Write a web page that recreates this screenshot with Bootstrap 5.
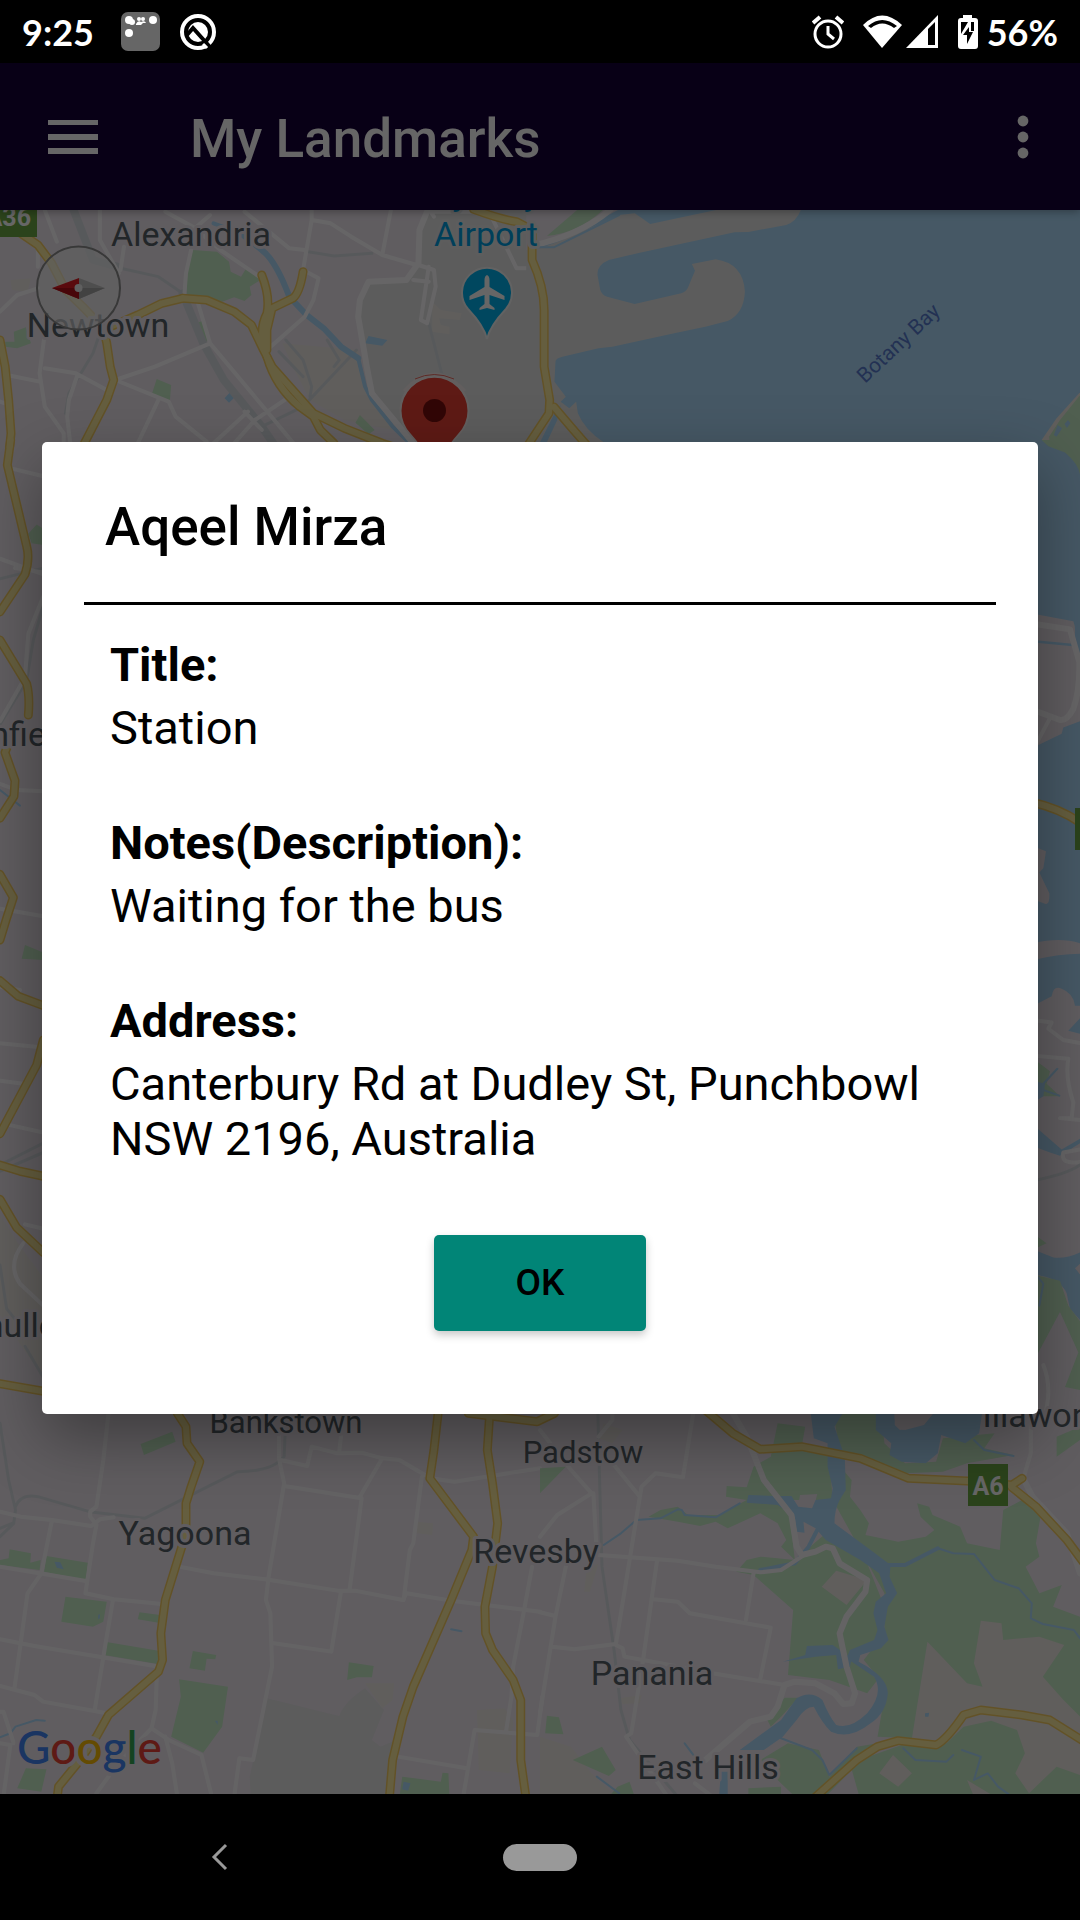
<!DOCTYPE html>
<html lang="en">
<head>
<meta charset="utf-8">
<meta name="viewport" content="width=device-width, initial-scale=1">
<title>My Landmarks</title>
<link rel="stylesheet" href="https://cdn.jsdelivr.net/npm/bootstrap@5.3.0/dist/css/bootstrap.min.css">
<style>
  body { font-family: Roboto, "Liberation Sans", sans-serif; background: #000; color: #000; }
  .status-bar { height: 63px; padding: 0 22px; background: #000; color: #fff; font: 700 36px/1 Lato, Roboto, sans-serif; }
  .status-bar svg, .nav-keys svg, .app-bar svg { display: block; flex: none; }
  .status-icons { gap: 19px; }
  .app-bar { height: 147px; padding: 0 48px; background: #160037; box-shadow: 0 2px 8px rgba(0,0,0,.3); z-index: 1; }
  .app-title { font-size: 53px; line-height: 62px; font-weight: 500; margin-left: 92px; color: #fff; }
  .icon-btn { background: none; border: 0; padding: 0; color: #fff; }
  .stage, .map-view { min-height: 0; }
  .scrim { background: rgba(0,0,0,.6); z-index: 2; padding: 0 42px 1px; }
  .landmark-dialog { border: 0; border-radius: 5px; background: #fff; box-shadow: 0 24px 64px rgba(0,0,0,.36); padding: 54px 42px 83px; }
  .landmark-name { font-size: 53px; line-height: 62px; font-weight: 500; margin: 0 0 44px; padding-left: 21px; }
  .rule-line { border-top: 3px solid #000; }
  .landmark-info { margin: 32px 0 0; padding: 0 26px; font-size: 47px; line-height: 55px; }
  .landmark-info dt { font-weight: 700; margin-bottom: 8px; }
  .landmark-info dd { margin: 0 0 60px; }
  .landmark-info dd:last-child { margin-bottom: 69px; }
  .ok-btn { width: 212px; height: 96px; padding: 0; border: 0; border-radius: 5px; background: #018577; color: #000; font-size: 37px; font-weight: 500; box-shadow: 0 4px 8px rgba(0,0,0,.22); }
  .ok-btn:hover { background: #01756a; color: #000; }
  .nav-keys { height: 126px; padding: 0 60px; background: #000; }
  .home-pill { width: 74px; height: 27px; border-radius: 14px; background: #999; }

  .map-art path { vector-effect: non-scaling-stroke; }
  .land { fill: #f0e8f1; } .water { fill: #aedcfc; } .park { fill: #c8edc8; } .field { fill: #e6e6e6; } .sand { fill: #f0ebe6; }
  .road, .rail, .creek, .casing, .lane { fill: none; stroke-linejoin: round; stroke-linecap: round; }
  .road { stroke: #fffdff; stroke-width: 4; } .road-lg { stroke-width: 6; } .bottom-road { stroke: #fbf8fb; }
  .rail { stroke: #dadfe3; stroke-width: 3; } .rail-lg { stroke-width: 8; }
  .creek { stroke: #aedcfc; stroke-width: 2; } .creek-md { stroke-width: 4; } .creek-lg { stroke-width: 6; }
  .casing { stroke: #f6cd62; } .lane { stroke: #fdec9f; }
  .casing .wide { stroke-width: 12; } .lane .wide { stroke-width: 8; }
  .casing { stroke-width: 9; } .lane { stroke-width: 6; }
  .place { font-size: 34px; fill: #555f66; stroke: #f0e8f1; stroke-width: 6; stroke-linejoin: round; paint-order: stroke; }
  .place-sm { font-size: 31px; }
  .poi { fill: #009fe0; stroke: #e9e9e9; }
  .bay { font-size: 21px; fill: #587cd0; }
  .shield { font-size: 25px; font-weight: 700; fill: #fff; }
  .brand { font: 500 46px Lato, sans-serif; stroke: #f0e8f1; stroke-width: 8; stroke-linejoin: round; paint-order: stroke; }
</style>
<script src="https://cdn.jsdelivr.net/npm/bootstrap@5.3.0/dist/js/bootstrap.bundle.min.js"></script>
</head>
<body>
<div class="vh-100 d-flex flex-column overflow-hidden">

  <header class="status-bar d-flex align-items-center justify-content-between flex-shrink-0">
    <div class="status-icons d-flex align-items-center">
      <span class="me-2">9:25</span>
      <svg width="39" height="39" viewBox="0 0 39 39" aria-hidden="true"><rect width="39" height="39" rx="7" fill="#666"/><g fill="#fff"><circle cx="8" cy="8" r="4"/><circle cx="11" cy="10" r="3"/><circle cx="18" cy="7" r="2"/><circle cx="22" cy="7" r="2"/><path d="M15 12q2-4 5-2q4-2 5 1h-3l-2 2h-5z"/><circle cx="32" cy="8" r="4"/><circle cx="8" cy="21" r="4"/></g></svg>
      <svg width="38" height="38" viewBox="0 0 38 38" aria-hidden="true"><circle cx="19" cy="19" r="16" fill="none" stroke="#fff" stroke-width="4"/><circle cx="19" cy="19" r="10" fill="#fff"/><path d="M8 22L14 15L31 34" fill="none" stroke="#000" stroke-width="4"/><path d="M24 31L28 35" stroke="#fff" stroke-width="3"/></svg>
    </div>
    <div class="status-icons d-flex align-items-center">
      <svg width="32" height="34" viewBox="0 0 32 34" aria-hidden="true"><g fill="none" stroke="#fff"><circle cx="16" cy="19" r="13" stroke-width="3"/><path d="M1 8L8 2M31 8L24 2" stroke-width="4"/><path d="M16 11V19L22 24" stroke-width="3"/></g></svg>
      <div class="d-flex gap-1">
        <svg width="39" height="33" viewBox="0 0 39 33" aria-hidden="true"><path d="M19 33L0 10Q19-9 39 10z" fill="#fff"/><path d="M5 11Q19-1 34 11L31 13Q19 4 8 13z"/></svg>
        <svg width="32" height="33" viewBox="0 0 32 33" aria-hidden="true"><path d="M32 0V33H0z" fill="#fff"/><path d="M22 14L29 7V30H22z"/></svg>
      </div>
      <div class="d-flex align-items-center gap-2">
        <svg width="22" height="34" viewBox="0 0 22 34" aria-hidden="true"><path d="M6 0H15V3H18Q21 3 21 6V31Q21 34 18 34H4Q1 34 1 31V6Q1 3 4 3H6z" fill="#fff"/><path d="M4 7H11L4 19zM14 7H17V16H14z" fill="#000"/><path d="M12 12L6 20H10V29L16 17H12z" fill="#000"/></svg>
        <span>56%</span>
      </div>
    </div>
  </header>

  <main class="stage position-relative flex-grow-1 d-flex flex-column">
    <nav class="app-bar position-relative d-flex align-items-center flex-shrink-0">
      <button class="icon-btn" type="button" aria-label="Menu">
        <svg width="50" height="34" viewBox="0 0 50 34"><path d="M0 0H50V5H0zM0 14H50V20H0zM0 28H50V34H0z" fill="currentColor"/></svg>
      </button>
      <h1 class="app-title mb-0 pt-1">My Landmarks</h1>
      <button class="icon-btn ms-auto" type="button" aria-label="More options">
        <svg width="18" height="44" viewBox="0 0 18 44"><g fill="currentColor"><circle cx="9" cy="6" r="5.4"/><circle cx="9" cy="22" r="5.4"/><circle cx="9" cy="38" r="5.4"/></g></svg>
      </button>
    </nav>

    <svg class="map-view map-art flex-grow-1 w-100" viewBox="0 210 1080 1584" preserveAspectRatio="xMidYMid slice" role="img" aria-label="Map">
      <defs>
        <g id="highways">
          <g transform="translate(0 200) scale(.3444 .3333)">
            <path d="M60 100L110 135L150 190L190 270L240 320L300 385L310 430L320 500L330 540L310 600L280 660L240 740M310 385L400 345L470 310L530 295"/>
            <path d="M0 420L15 500L25 600L32 700L28 740M760 225Q785 290 775 340Q750 390 770 450M880 215Q870 280 850 295L790 325L775 390L775 450M775 470Q800 560 870 620L910 650L930 690L970 730"/>
            <path class="wide" d="M530 295L600 300L680 335L730 375L765 450L790 500L850 570L910 640L1000 685L1110 730L1200 760M1375 28Q1460 60 1500 65L1545 90L1545 180Q1580 260 1580 330L1580 500L1596 600L1594 640L1530 740"/>
          </g>
          <path d="M554 407L571 427L591 450"/>
          <g transform="translate(0 440) scale(.3333 .625)">
            <path d="M32 0L22 40L80 170Q90 190 75 215L0 275M0 320L80 390Q90 410 85 440M30 480L15 500L45 545L42 570L0 605M0 695L40 732L20 765L0 800M0 865L55 890L130 905M130 960L110 1000L0 1110M0 1160L60 1170L130 1178M0 1215L50 1260L130 1300M0 1510L130 1522"/>
          </g>
          <g transform="translate(1000 440) scale(.3333 .625)"><path d="M100 580Q180 590 240 612"/></g>
          <g transform="translate(0 1400) scale(.3444 .3333)">
            <path d="M515 40L540 80L543 130L580 185L555 260L540 310L540 400L510 500L480 600L467 700L472 780L460 815L315 945L280 1010L225 1090L170 1160L165 1200"/>
            <path d="M1272 40L1260 150L1248 235L1375 410L1370 450L1310 600L1200 860L1170 950L1140 1080L1130 1200M1360 40L1560 65L1610 40"/>
            <path class="wide" d="M1422 40L1415 150L1430 250L1445 370L1430 500L1408 620L1410 700L1430 750L1490 840L1512 900L1512 1080L1528 1200"/>
          </g>
          <g transform="translate(540 1400) scale(.3444 .3333)">
            <path class="wide" d="M480 30L560 100L640 148L760 140L930 175L1070 235L1240 243L1370 255L1400 235M1370 262L1440 320L1530 420L1580 490"/>
            <path d="M790 1200L920 1080L980 1040L1040 1022L1150 1035Q1180 1020 1230 945L1280 930L1400 945L1480 960L1580 1025"/>
          </g>
        </g>
      </defs>
      <rect class="land" y="210" width="1080" height="1584"/>

      <!-- inner west, airport -->
      <g transform="translate(0 200) scale(.3444 .3333)">
        <path class="field" d="M1240 28L1220 100L1215 190L1180 240L1070 245L1040 330L1065 500L1080 580L1200 740L1600 740V28z"/>
        <path class="sand" d="M820 430L1040 450L1060 560L1140 690L1000 660L900 600L850 500z"/>
        <path class="sand" d="M1255 305L1280 330L1340 340L1335 360L1275 355L1280 375L1305 380V403L1255 395zM30 240L90 235L80 275L35 270z"/>
        <path class="park" d="M560 150L630 155L665 185L670 215L700 230L715 205L765 235L725 260L730 285L710 303L680 292L645 305L540 290L545 210zM568 370L590 362L608 420L585 430zM455 537L497 555L493 605L440 585zM40 395L75 382L90 430L50 445L15 440V425L42 425zM1045 645L1088 690L1070 703L1032 668z"/>
        <path class="water" d="M1060 430L1070 408L1125 420L1110 437zM652 595L668 577L683 590L665 608z"/>
        <path class="rail rail-lg" d="M210 20L270 180L340 200M530 280L590 430L650 540L760 680L800 740"/>
        <path class="rail" d="M350 205L460 230L530 280M290 400L270 460L200 580L190 640M830 420L880 480L905 560L900 590M810 455L880 530M950 420L985 480L970 500M1035 450L880 620L760 680M895 155L970 168L1080 160M1245 370L1285 530"/>
        <path class="creek creek-lg" d="M700 100L760 150Q800 180 840 290L890 345L940 385L990 440L1040 475"/>
        <path class="creek creek-md" d="M620 70L700 100M1040 475L1060 560L1080 600L1140 680L1190 730"/>
        <path class="road" d="M110 130L110 200M130 30L165 125M290 30L290 120L345 220M555 150L540 220L535 290M360 140L350 210M480 35L560 80L640 150L760 235M610 45L560 90M710 35L840 145L885 150M905 30L905 60L880 210L925 235L910 300L885 350L775 450M905 60L960 70L1020 110L1110 165L1210 195M1135 30L1110 165M0 335L50 285L110 265M575 310L610 430L780 640L860 740M610 430L450 500L335 540L490 605L510 650L600 725M130 400L115 520L130 620L185 700V740M130 505L220 520L310 570M225 525L200 600L195 650L205 740M20 525L115 545M460 600L400 730M855 580L740 660L680 730M720 635L620 730M0 605L15 610M710 635L760 690M1260 50L1250 35H1420L1500 205L1530 205"/>
        <path class="road road-lg" d="M1240 35L1218 90L1215 190L1180 240L1070 245L1045 300L1040 350L1065 500L1080 580L1160 680L1200 730"/>
        <path class="road" d="M1215 195L1260 210L1265 260L1240 370L1222 360L1245 200M1200 240L1245 245"/>
      </g>

      <!-- Botany Bay and the port -->
      <g transform="translate(540 200) scale(.3444 .3333)">
        <path class="water" d="M0 28H1600V760H0z"/>
        <path class="land" d="M-40 28H230L60 120L-40 150z"/>
        <path class="park" d="M110 28H185Q110 100 20 108z"/>
        <path class="field" d="M-40 160L60 122L230 45L275 40L320 72L520 28L758 28Q745 65 715 75L605 96L565 97L290 158L200 180Q165 195 167 225L175 270Q180 285 195 290L275 312L410 280Q425 275 430 262L450 212L441 192L510 178Q590 190 595 275Q592 340 545 363L480 380L390 400L210 440L170 445L65 470Q45 475 45 485L42 545L75 590L60 605L85 625L105 605L110 640Q130 690 185 727V760H-40z"/>
        <path class="water" d="M60 615L50 660L20 727H0L40 645z"/>
        <path class="sand" d="M1600 540L1500 655L1455 722V760H1600z"/>
        <path class="park" d="M1600 545L1510 660L1478 710L1485 760H1600z"/>
        <path class="water" d="M1492 705L1503 675L1516 685L1500 710zM1523 672L1533 660L1540 670L1530 684z"/>
        <path class="road road-lg" d="M205 28Q120 105 -25 138"/>
        <path class="creek" d="M-5 142H40L230 45"/>
      </g>

      <!-- east edge -->
      <g transform="translate(1000 440) scale(.3333 .625)">
        <path class="water" d="M100 0H240V1568H100z"/>
        <path class="park" d="M125 0L145 10L195 20Q235 38 240 55V0z"/>
        <path class="land" d="M100 278L220 290Q228 300 224 315L240 350V450L190 460L185 470L100 492zM100 650L138 658L130 685L118 692L148 725Q150 745 135 742L100 735zM100 805Q180 795 240 805V822Q180 822 100 832zM100 905L155 890Q160 872 185 878Q220 885 225 905H240V1300Q200 1310 160 1308L100 1295zM225 1325L240 1318V1335zM100 1335Q180 1340 200 1365L210 1390L240 1408V1568H100z"/>
        <path class="water" d="M205 945L240 925V950zM100 320L218 326V330L100 324z"/>
        <path class="park" d="M100 990L150 1010L140 1030L180 1050H100zM100 1335L180 1345L205 1385L240 1410V1520L195 1515L235 1460L180 1395L100 1475zM100 1270L140 1285L100 1295z"/>
        <path class="water" d="M100 1025L135 1030L130 1050L100 1060zM100 1096L185 1135L240 1118V1125L180 1145L150 1140L100 1130z"/>
        <path class="creek" d="M130 1030L172 1006M130 1040L178 1049M115 1340L130 1350L118 1385"/>
        <path class="road road-lg" d="M100 294L210 303L238 355Q240 400 220 430Q200 450 180 448L100 432"/>
        <path class="road" d="M150 445L110 485M100 928L155 932L145 942L190 960L240 965M100 985L205 990Q195 1020 220 1060L215 1085H180L240 1088M240 1135L190 1140Q180 1160 240 1155M130 1480Q160 1520 130 1568"/>
        <path class="rail" d="M100 1185Q200 1175 240 1160"/>
      </g>

      <!-- west edge -->
      <g transform="translate(0 440) scale(.3333 .625)">
        <path class="sand" d="M0 1240L60 1290L130 1340V1500L0 1400z"/>
        <path class="park" d="M65 830L75 808L130 820V832zM85 150L110 135L130 142V168L95 165z"/>
        <path class="rail" d="M0 222L130 205M130 265L100 320L80 385L0 455M0 1160L130 1125M0 1170L130 1140M0 1320L20 1390L50 1410M75 1450L130 1500"/>
        <path class="creek" d="M0 560L60 585"/>
        <path class="road" d="M30 45L130 58M0 190L130 215M45 205L130 212M0 550L50 560L130 562M0 750L130 762M0 875L60 880M0 965L130 972M0 1025L70 1030M20 1095L130 1108M75 1255L130 1262M70 1285Q20 1320 60 1350L130 1385"/>
        <path class="road" d="M130 250L85 310L75 380L0 450"/>
      </g>

      <!-- Bankstown, Yagoona -->
      <g transform="translate(0 1400) scale(.3444 .3333)">
        <path class="field" d="M775 895L985 948Q1000 905 1060 865L1115 930L1080 1020L1105 1040L1150 1020L1130 1190H728L725 1130z"/>
        <path class="sand" d="M1385 930L1465 925L1490 960L1480 1120L1390 1110zM1060 850H1145L1140 900L1110 925zM1210 365L1258 370L1255 405L1210 400z"/>
        <path class="park" d="M408 132L500 95L510 125L418 165zM0 480L25 475L28 448L90 460L88 488L118 480L115 510L0 495zM135 468L255 488L250 540L128 515zM190 590L310 605L300 665L270 680L178 665zM405 637L465 645L460 668L400 658zM305 725L460 752L458 792L302 765zM560 753L628 765L625 778L600 776L595 812L550 805zM520 838L662 860L645 980L590 1058L497 1010L525 890zM1013 787L1085 798L1080 832H1036L1008 840zM1168 1130L1280 1145L1285 1118L1302 1120L1305 1190H1160zM75 1105L135 1108L120 1175L50 1165z"/>
        <path class="water" d="M1172 1145L1192 1150L1185 1172L1168 1168zM158 485L175 487L185 508L165 503zM285 645L290 642V655L285 658zM624 962L632 962V975z"/>
        <path class="creek" d="M0 1012L30 1000L45 980L105 960L130 962M1310 688L1340 694"/>
        <path class="rail" d="M0 70L25 240L45 330L40 370L0 410M0 385L35 370M45 320Q60 280 110 290L260 335L420 355L690 215Q790 215 825 170L828 100"/>
        <path class="road bottom-road" d="M315 40L300 180L280 320L262 335V350L280 375L270 430L248 580L330 598L470 612M0 335L60 350L150 360L265 378L290 358L330 352M150 365L120 520L80 580L60 730L42 865M0 500L250 543M328 600L305 740L275 930M0 718L100 738L450 798M0 858L100 885L125 905L310 940M455 835L452 930L440 985L350 1080L280 1180M440 985L490 1020L585 1065L615 1190M480 1010L500 1090L515 1190M0 935H10L40 1030M0 1030L30 1035L10 1190M520 500L620 520L770 538L980 572H1030L1170 600L1180 580L1310 602L1568 635"/>
        <path class="road bottom-road" d="M810 100V175L825 250L780 530L772 600L785 640L790 800L735 1080L695 1075L680 1190M815 180L892 198L905 140L980 160L1050 158L1110 175L1160 180L1250 235L1320 245L1568 205M990 110L985 155M825 258L1050 295L1015 570M1110 175L1045 290M1225 230L1200 430L1190 450L1172 600M990 575L962 755L795 730M1545 500L1520 640L1490 800L1485 890L1470 990M1345 1190L1378 990L1560 1005L1575 890M1155 1070L1355 1105"/>
      </g>

      <!-- Georges River -->
      <g transform="translate(540 1400) scale(.3444 .3333)">
        <path class="sand" d="M1125 725L1280 640L1450 700L1568 740V1200H1080V1015zM0 1010L90 1040L150 1120L220 1190H0zM230 895L295 885L290 910L240 912zM135 510L170 490L145 575H128zM185 70L240 90L210 130L170 115z"/>
        <path class="park" d="M690 70L770 80L760 140L840 170L850 300H600L540 290L542 258L600 262L620 200L670 170zM315 350L350 330L400 320L430 345L520 345L600 300L720 300L740 480L700 440L715 420L690 370L640 340L545 385L510 365L465 378L400 365z"/>
        <path class="park" d="M850 30H990L1000 130L1060 190L1150 185L1170 115L1320 100L1290 145L1375 165L1240 190L1170 215L1060 220L870 150zM1500 110L1568 80V120L1500 170z"/>
        <path class="park" d="M850 300L880 210L905 240L900 290L930 330L955 370L945 405L1040 425L1120 410L1145 390L1105 350L1095 310L1130 320L1140 345L1220 380L1240 430L1335 450L1345 330L1400 300L1455 340L1440 430L1450 470L1410 500L1450 580L1515 555L1490 620L1568 650V950L1520 900L1460 830L1522 735L1450 710L1345 720L1340 670L1280 662L1260 790L1285 860L1240 850L1125 725L1080 1015L980 1010L1005 860L940 780L1000 700L1000 580z"/>
        <path class="park" d="M570 515L600 480L640 470L740 480L830 400L950 490L1000 620L980 720L900 760L980 840L950 880L840 840L720 825L735 630L620 525z"/>
        <path class="park" d="M930 1200L900 1090L1050 1035L1180 1030L1230 980L1310 962L1385 990L1408 1060L1380 1120L1420 1180L1500 1100L1568 1125V1200zM640 1080L720 1030L810 1050L840 1130L920 1040L980 1030L820 1200H790L740 1190L690 1140zM20 947L55 952L68 1003L15 1000zM95 1080L180 1040L220 1110L200 1128zM0 205L75 200L0 280zM710 893H750L700 950L670 980L660 960zM225 1160L260 1145L275 1190H200zM605 1165L700 1160V1190H605z"/>
        <path class="sand" d="M860 512L950 540L890 615L818 560zM985 1120L1025 1065L1080 1120L1040 1160zM1240 1140L1320 1190H1260z"/>
        <path class="land" d="M755 285L805 282L795 325L750 318z"/>
        <path class="water" d="M975 30H1030Q1025 90 1060 90L1115 75L1150 30H1285L1275 100L1235 130L1165 105L1155 160L1120 190L1050 185L1015 165L1020 130L975 90zM785 30H885L855 80L885 170L888 270L870 300Q855 330 855 370L960 450L1018 495L1015 530L1037 580L1010 620L1000 680L1012 720L990 745L930 765L925 785Q1010 830 1010 880Q1005 940 960 970Q900 1020 845 995Q820 970 795 920Q770 920 745 960L705 1010L650 1050H580L700 960L745 895Q785 870 820 900Q840 950 860 975Q900 990 950 940Q1000 880 970 830L890 775L900 750L970 720L980 690L968 640L975 605L1005 580L985 520L930 480L830 420L800 385L765 365L768 398L745 395L740 350L690 315L600 308L605 285L680 288L730 288L750 320L790 325L800 300L845 295L850 265L835 200V130L795 115zM705 785L770 765L775 738L850 735L905 775L900 800L865 808L860 765L800 770zM525 1115H545V1190H520zM1118 940L1130 938L1128 950L1118 950z"/>
        <path class="land" d="M1030 40H1070V85L1045 90L1030 75z"/>
        <path class="creek" d="M580 310L510 352L420 345L412 330L400 328L350 355L280 360L235 400L185 435M1155 445L1200 460L1260 462L1320 540L1390 565L1428 610L1425 655L1460 672L1550 690L1568 715M1260 120L1290 150L1375 168M700 1015L790 1050L820 1080L840 1125L920 1045M1055 1045L1090 1080L1180 1085L1200 1065M1225 1050L1280 1070L1260 1140L1300 1120L1330 1160L1370 1190M165 1130L230 1180M420 1030L445 1065"/>
        <path class="creek creek-md" d="M1010 495L1060 495L1155 445M805 390L780 440L740 490L640 510"/>
        <path class="rail" d="M168 40L172 200L180 500L215 750L235 930L260 1020L400 1190"/>
        <path class="road bottom-road" d="M445 40L415 232L335 220L295 260L290 290L220 735L240 745L245 770L350 790L500 820L710 855M0 90L90 210L150 280L50 345L0 410M155 280L165 460M215 195L290 290M170 465L400 482L510 500L640 517L700 510L760 470M340 480L300 775L265 1000L250 1010L290 1070L370 1190M620 520L598 660M330 598L400 605L435 640L670 683L640 835M75 500L45 650L0 940M0 637L45 648M35 740L100 748L220 732M1425 40V160L1405 230L1380 260M210 40V60L170 110M450 1150L500 1190"/>
        <path class="road bottom-road road-lg" d="M710 855L690 920L670 950L610 965L480 1080M710 855L740 845L800 850L855 880L880 912L905 910L915 880L890 800L870 700L890 650L945 575L950 540L870 490L850 445L830 440L800 455L760 465L745 440L730 345L650 240L600 110L560 40M1405 240L1430 290L1530 400L1568 520"/>
      </g>

      <use href="#highways" class="casing"/>
      <use href="#highways" class="lane"/>

      <!-- labels -->
      <g class="place" text-anchor="middle">
        <text x="191" y="246">Alexandria</text>
        <text x="98" y="337">Newtown</text>
        <text class="place-sm" x="286" y="1433">Bankstown</text>
        <text x="185" y="1545">Yagoona</text>
        <text x="536" y="1563">Revesby</text>
        <text class="place-sm" x="583" y="1463">Padstow</text>
        <text x="652" y="1685">Panania</text>
        <text x="708" y="1779">East Hills</text>
        <text x="1046" y="1427">Illawong</text>
        <text x="12" y="746">Ashfield</text>
        <text x="25" y="1337">Chullora</text>
        <text class="poi" x="486" y="205">Sydney</text>
        <text class="poi" x="486" y="246">Airport</text>
      </g>
      <text class="bay" transform="translate(865 384) rotate(-43)">Botany Bay</text>
      <g fill="#6ca844"><path d="M0 210H37V237H0zM968 1464H1008V1506H968zM1075 808H1080V850H1075z"/></g>
      <text class="shield" x="31" y="226" text-anchor="end">A36</text>
      <text class="shield" x="988" y="1495" text-anchor="middle">A6</text>

      <!-- airport pin -->
      <path d="M487 339Q484 326 468 309A25 25 0 1 1 506 309Q490 326 487 339z" fill="#00b2ee" stroke="#f4f4f4" stroke-width="2"/>
      <path d="M487 275q2.500 1 2.500 5v7l15 9v4l-15-5v9l5 4v2l-7.500-2-7.500 2v-2l5-4v-9l-15 5v-4l15-9v-7q0-4 2.500-5z" fill="#fff"/>
      <!-- selected landmark, drawn over a second one -->
      <path d="M434.500 480Q430 455 410 434A34 34 0 1 1 459 434Q439 455 434.500 480z" fill="#f6eeee" stroke="#f6eeee" stroke-width="2"/>
      <path d="M434.500 480Q430 455 411 434A33 33 0 1 1 458 434Q439 455 434.500 480z" fill="#ea4335"/>
      <path d="M404 391Q434 357 465 391" fill="none" stroke="#f4eaea" stroke-width="3"/>
      <path d="M415 379Q434 370 454 379" fill="none" stroke="#ea6b60" stroke-width="1"/>
      <circle cx="434.500" cy="410.500" r="11.500" fill="#7c1010"/>
      <!-- compass -->
      <circle cx="78.500" cy="288" r="41.500" fill="#f2f2f2" fill-opacity=".66" stroke="#8c8c8c" stroke-width="2"/>
      <path d="M52 288L79 278V299z" fill="#e01b22"/><path d="M52 288H79V299z" fill="#b51018"/>
      <path d="M105 288L79 278V299z" fill="#c4c4c4"/><path d="M105 288H79V299z" fill="#a6a6a6"/>
      <circle cx="78.500" cy="288" r="4" fill="#eee"/>
      <text class="brand" x="17" y="1764"><tspan fill="#4285f4">G</tspan><tspan fill="#ea4335">o</tspan><tspan fill="#fbbc05">o</tspan><tspan fill="#4285f4">g</tspan><tspan fill="#34a853">l</tspan><tspan fill="#ea4335">e</tspan></text>
    </svg>

    <div class="scrim position-absolute top-0 start-0 w-100 h-100 d-flex align-items-center">
      <section class="landmark-dialog modal-content" role="dialog" aria-modal="true" aria-labelledby="owner">
        <h2 class="landmark-name" id="owner">Aqeel Mirza</h2>
        <div class="rule-line"></div>
        <dl class="landmark-info">
          <dt>Title:</dt>
          <dd>Station</dd>
          <dt>Notes(Description):</dt>
          <dd>Waiting for the bus</dd>
          <dt>Address:</dt>
          <dd>Canterbury Rd at Dudley St, Punchbowl NSW 2196, Australia</dd>
        </dl>
        <button class="ok-btn btn align-self-center" type="button">OK</button>
      </section>
    </div>
  </main>

  <nav class="nav-keys d-flex align-items-center flex-shrink-0" aria-label="System navigation">
    <div class="col d-flex justify-content-center">
      <button class="icon-btn" type="button" aria-label="Back"><svg width="18" height="28" viewBox="0 0 18 28"><path d="M15 2L3 14L15 26" fill="none" stroke="#999" stroke-width="3"/></svg></button>
    </div>
    <div class="col d-flex justify-content-center"><button class="icon-btn home-pill" type="button" aria-label="Home"></button></div>
    <div class="col"></div>
  </nav>
</div>
</body>
</html>
